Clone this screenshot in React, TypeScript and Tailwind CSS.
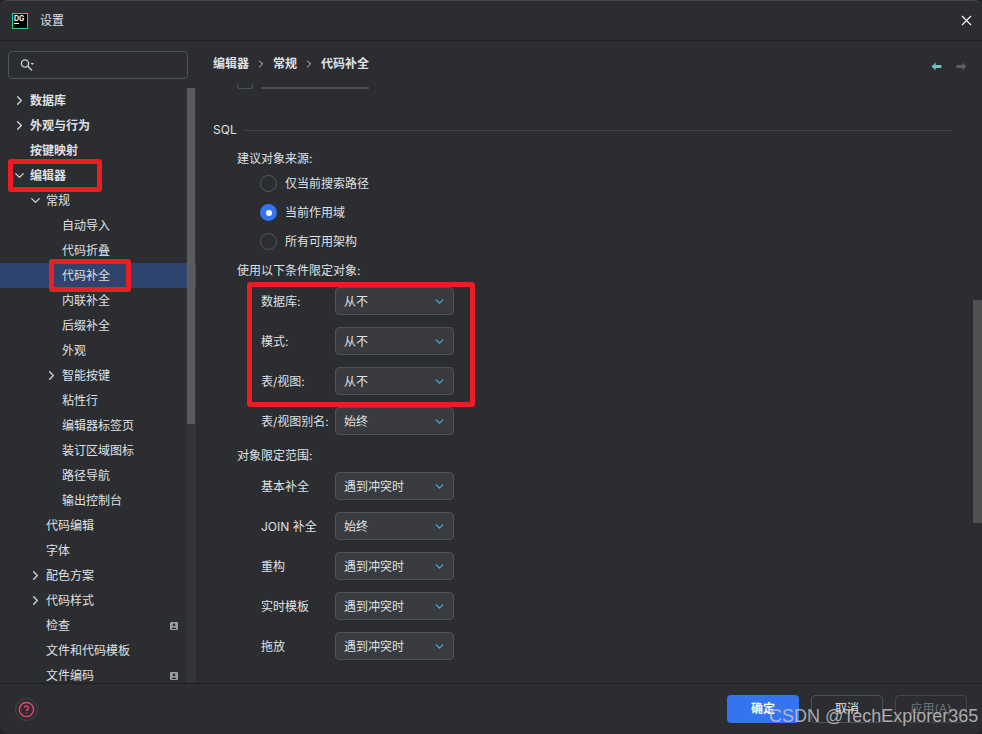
import { ChevronDown, ChevronRight, HelpCircle, X } from "lucide-react";

const navItems: { label: string; depth: number; arrow?: "right" | "down"; bold?: boolean; selected?: boolean; badge?: boolean }[] = [
  { label: "数据库", depth: 0, arrow: "right", bold: true },
  { label: "外观与行为", depth: 0, arrow: "right", bold: true },
  { label: "按键映射", depth: 0, bold: true },
  { label: "编辑器", depth: 0, arrow: "down", bold: true },
  { label: "常规", depth: 1, arrow: "down" },
  { label: "自动导入", depth: 2 },
  { label: "代码折叠", depth: 2 },
  { label: "代码补全", depth: 2, selected: true },
  { label: "内联补全", depth: 2 },
  { label: "后缀补全", depth: 2 },
  { label: "外观", depth: 2 },
  { label: "智能按键", depth: 2, arrow: "right" },
  { label: "粘性行", depth: 2 },
  { label: "编辑器标签页", depth: 2 },
  { label: "装订区域图标", depth: 2 },
  { label: "路径导航", depth: 2 },
  { label: "输出控制台", depth: 2 },
  { label: "代码编辑", depth: 1 },
  { label: "字体", depth: 1 },
  { label: "配色方案", depth: 1, arrow: "right" },
  { label: "代码样式", depth: 1, arrow: "right" },
  { label: "检查", depth: 1, badge: true },
  { label: "文件和代码模板", depth: 1 },
  { label: "文件编码", depth: 1, badge: true },
];

const qualifyRows = [
  { label: "数据库:", value: "从不" },
  { label: "模式:", value: "从不" },
  { label: "表/视图:", value: "从不" },
  { label: "表/视图别名:", value: "始终" },
];

const scopeRows = [
  { label: "基本补全", value: "遇到冲突时" },
  { label: "JOIN 补全", value: "始终" },
  { label: "重构", value: "遇到冲突时" },
  { label: "实时模板", value: "遇到冲突时" },
  { label: "拖放", value: "遇到冲突时" },
];

function NavRow({ item }: { item: (typeof navItems)[number] }) {
  const pad = item.depth === 0 ? "pl-[30px]" : item.depth === 1 ? "pl-[46px]" : "pl-[62px]";
  const arrowPos = item.depth === 0 ? "left-[12px]" : item.depth === 1 ? "left-[28px]" : "left-[44px]";
  return (
    <div className={`relative flex h-[25px] shrink-0 items-center pr-[18px] ${pad} ${item.selected ? "bg-[#2e436e]" : ""}`}>
      {item.arrow === "right" && <ChevronRight size={15} strokeWidth={2.2} className={`absolute ${arrowPos} text-[#ced0d6]`} />}
      {item.arrow === "down" && <ChevronDown size={15} strokeWidth={2.2} className={`absolute ${arrowPos} text-[#ced0d6]`} />}
      <span className={`text-[12px] ${item.bold ? "font-bold text-[#dfe1e5]" : "text-[#dfe1e5]"}`}>{item.label}</span>
      {item.badge && (
        <svg width="8" height="8" viewBox="0 0 8 8" className="ml-auto">
          <rect width="8" height="8" rx="1" fill="#9aa0a6" />
          <circle cx="4" cy="2.9" r="1.4" fill="#2b2d30" />
          <path d="M1.6 7 C1.6 5 6.4 5 6.4 7 Z" fill="#2b2d30" />
        </svg>
      )}
    </div>
  );
}

function Combo({ value }: { value: string }) {
  return (
    <div className="flex h-[28px] w-[119px] items-center justify-between rounded-[4px] border border-[#4e5157] bg-[#393b40] pl-[8px] pr-[7px]">
      <span className="pt-[2px] text-[12px] text-[#dfe1e5]">{value}</span>
      <ChevronDown size={13} strokeWidth={2.4} className="text-[#4fa8d8]" />
    </div>
  );
}

function Radio({ label, checked }: { label: string; checked?: boolean }) {
  return (
    <div className="flex h-[29px] items-center gap-[8px] pl-[23px]">
      {checked ? (
        <span className="flex size-[17px] items-center justify-center rounded-full bg-[#3574f0]">
          <span className="size-[6px] rounded-full bg-white" />
        </span>
      ) : (
        <span className="size-[17px] rounded-full border border-[#55585d]" />
      )}
      <span className="text-[12px] text-[#dfe1e5]">{label}</span>
    </div>
  );
}

function FormRow({ label, value }: { label: string; value: string }) {
  return (
    <div className="flex h-[28px] items-center">
      <span className="w-[74px] whitespace-nowrap pt-[2px] text-[12px] text-[#dfe1e5]">{label}</span>
      <Combo value={value} />
    </div>
  );
}

export default function App() {
  return (
    <div className="relative h-[734px] w-[982px] overflow-hidden bg-[#222326] font-['Inter','Noto_Sans_CJK_SC',sans-serif] text-[12px] text-[#dfe1e5]">
      <div className="flex h-full flex-col overflow-hidden rounded-[8px] border-t border-[#46484c] bg-[#2b2d30]">
        <header className="flex h-[40px] shrink-0 items-center border-b border-[#1e1f22] pl-[12px] pr-[7px]">
          <div className="flex size-[16px] flex-col border border-[#2fd68a] bg-black px-[1px] pt-[1px]">
            <span className="text-[7px] font-bold leading-[7px] text-white">DG</span>
            <span className="mt-[1px] h-[1px] w-[5px] bg-white" />
          </div>
          <span className="ml-[12px] text-[12px] text-[#dfe1e5]">设置</span>
          <X size={17} strokeWidth={1.5} className="ml-auto text-white" />
        </header>

        <div className="flex min-h-0 flex-1">
          <aside className="flex w-[196px] shrink-0 flex-col">
            <div className="flex h-[47px] shrink-0 items-start pl-[8px] pt-[10px]">
              <div className="flex h-[28px] w-[180px] items-center rounded-[4px] border border-[#4e5157] pl-[11px]">
                <svg width="15" height="14" viewBox="0 0 15 14" className="text-[#ced0d6]">
                  <circle cx="5" cy="5.5" r="3.6" fill="none" stroke="currentColor" strokeWidth="1.4" />
                  <path d="M7.8 8.3 L12 12.5" stroke="currentColor" strokeWidth="1.4" />
                  <path d="M10.5 5 H14 L12.25 7 Z" fill="currentColor" />
                </svg>
              </div>
            </div>
            <div className="relative min-h-0 flex-1">
              <nav className="flex h-full flex-col overflow-hidden">
                {navItems.map((item) => (
                  <NavRow key={item.label} item={item} />
                ))}
              </nav>
              <div className="absolute inset-y-0 right-0 w-[10px] bg-white/[0.04] pr-[1px] pl-[1px]">
                <div className="h-[336px] bg-[#5a5b5d]" />
              </div>
            </div>
          </aside>

          <main className="flex min-w-0 flex-1 flex-col">
            <div className="flex h-[43px] shrink-0 items-center pl-[17px] pr-[15px] pt-[3px]">
              <span className="font-bold text-[#dfe1e5]">编辑器</span>
              <ChevronRight size={12} className="mx-[6px] text-[#ced0d6]" />
              <span className="font-bold text-[#dfe1e5]">常规</span>
              <ChevronRight size={12} className="mx-[6px] text-[#ced0d6]" />
              <span className="font-bold text-[#dfe1e5]">代码补全</span>
              <svg width="11" height="9" viewBox="0 0 12 10" className="ml-auto mt-[4px]">
                <path d="M0.5 5 L5 0.5 V3.2 H11.5 V6.8 H5 V9.5 Z" fill="#6fc3bd" />
              </svg>
              <svg width="11" height="9" viewBox="0 0 12 10" className="ml-[14px] mt-[4px]">
                <path d="M11.5 5 L7 0.5 V3.2 H0.5 V6.8 H7 V9.5 Z" fill="#5a5c5f" />
              </svg>
            </div>

            <div className="flex min-h-0 flex-1">
              <div className="min-w-0 flex-1 overflow-hidden">
                <div className="flex h-[5px] items-end overflow-hidden pl-[41px]">
                  <span className="h-[5px] w-[16px] rounded-b-[3px] border border-t-0 border-[#4e5157]" />
                  <span className="ml-[8px] h-[2px] w-[108px] bg-[#4a4c50]" />
                </div>

                <div className="mt-[33px] flex h-[16px] items-center pl-[17px] pr-[21px]">
                  <span className="text-[12px] text-[#dfe1e5]">SQL</span>
                  <span className="ml-[6px] h-[1px] flex-1 bg-[#3e4043]" />
                </div>

                <div className="mt-[13px] pl-[41px]">
                  <div className="h-[16px] leading-[16px]">建议对象来源:</div>
                  <div className="mt-[2px]">
                    <Radio label="仅当前搜索路径" />
                    <Radio label="当前作用域" checked />
                    <Radio label="所有可用架构" />
                  </div>
                  <div className="mt-[7px] h-[16px] leading-[16px]">使用以下条件限定对象:</div>
                  <div className="mt-[8px] flex flex-col gap-[12px] pl-[24px]">
                    {qualifyRows.map((row) => (
                      <FormRow key={row.label} label={row.label} value={row.value} />
                    ))}
                  </div>
                  <div className="mt-[13px] h-[16px] leading-[16px]">对象限定范围:</div>
                  <div className="mt-[8px] flex flex-col gap-[12px] pl-[24px]">
                    {scopeRows.map((row) => (
                      <FormRow key={row.label} label={row.label} value={row.value} />
                    ))}
                  </div>
                </div>
              </div>
              <div className="flex w-[9px] shrink-0 flex-col pt-[216px]">
                <div className="h-[223px] bg-[#505153]" />
              </div>
            </div>
          </main>
        </div>

        <footer className="flex h-[51px] shrink-0 items-center border-t border-[#1e1f22] pl-[15px] pr-[15px]">
          <span className="flex size-[23px] items-center justify-center rounded-full border border-[#43454a]">
            <HelpCircle size={17} strokeWidth={2} className="text-[#e5466b]" />
          </span>
          <button className="ml-auto h-[28px] w-[72px] rounded-[4px] bg-[#3574f0] font-bold text-white">确定</button>
          <button className="ml-[12px] h-[28px] w-[72px] rounded-[4px] border border-[#4e5157] text-[#dfe1e5]">取消</button>
          <button className="ml-[12px] h-[28px] w-[72px] rounded-[4px] border border-[#43454a] text-[#6f7277]">应用(A)</button>
        </footer>
      </div>

      <span className="pointer-events-none absolute left-[8px] top-[159px] h-[33px] w-[94px] rounded-[3px] border-[5px] border-[#ee1c25]" />
      <span className="pointer-events-none absolute left-[49px] top-[259px] h-[33px] w-[82px] rounded-[3px] border-[5px] border-[#ee1c25]" />
      <span className="pointer-events-none absolute left-[247px] top-[282px] h-[125px] w-[228px] rounded-[3px] border-[5px] border-[#ee1c25]" />
      <span className="pointer-events-none absolute left-[769px] top-[703px] font-['Liberation_Sans',sans-serif] text-[18px] text-[#c4c4c4]/85">CSDN @TechExplorer365</span>
    </div>
  );
}
